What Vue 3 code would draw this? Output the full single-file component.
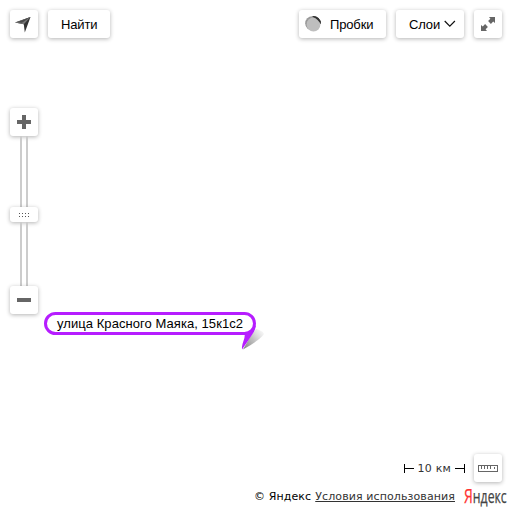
<script setup>
const address = 'улица Красного Маяка, 15к1с2'
const gripColumns = [1, 4, 7, 10]
</script>

<template>
  <main class="map">
    <header class="toolbar">
      <button class="control square" aria-label="Местоположение">
        <svg width="28" height="28" viewBox="0 0 28 28">
          <path d="M5 12.5 20.5 7 14.8 22.5 13.8 14.2Z" fill="#333" />
          <path d="M5 12.5 20.5 7 13.8 14.2Z" fill="#777" />
          <path d="M7 12.2 20.5 7 12 12.8Z" fill="#4a4a4a" />
        </svg>
      </button>
      <button class="control find">Найти</button>
      <span class="spacer"></span>
      <button class="control traffic">
        <svg width="18" height="18" viewBox="0 0 18 18">
          <circle cx="7.2" cy="8.2" r="7" fill="#999" />
          <path d="M7.2 1.2A7.6 7.6 0 0 1 15.9 9L12.5 7Z" fill="#333" />
          <circle cx="8.5" cy="9.5" r="6.9" fill="#bebebe" />
          <path d="M8 1.2A7.4 7.4 0 0 1 15.9 9Q13.2 4.8 8 1.2Z" fill="#333" />
        </svg>
        <span>Пробки</span>
      </button>
      <button class="control layers">
        <span>Слои</span>
        <svg width="12" height="8" viewBox="0 0 12 8">
          <path d="M.7 1 5.8 6.2 10.9 1" fill="none" stroke="#111" stroke-width="1.2" />
        </svg>
      </button>
      <button class="control square" aria-label="На весь экран">
        <svg width="28" height="28" viewBox="0 0 28 28" fill="#666">
          <path d="M15 7H21V13L19.2 11.6 16.9 13.9 14.1 11.1 16.4 8.8Z" />
          <path d="M13 21H7V15L8.8 16.4 11.1 14.1 13.9 16.9 11.6 19.2Z" />
        </svg>
      </button>
    </header>

    <section class="zoom">
      <button class="control square" aria-label="Приблизить">
        <svg width="28" height="28" viewBox="0 0 28 28">
          <path d="M7 12H12V7H16V12H21V16H16V21H12V16H7Z" fill="#666" />
        </svg>
      </button>
      <div class="rail upper"></div>
      <div class="control thumb">
        <svg width="12" height="6" viewBox="0 0 12 6" fill="#555">
          <template v-for="x in gripColumns" :key="x">
            <rect :x="x" y="1" width="1" height="1" />
            <rect :x="x" y="4" width="1" height="1" />
          </template>
        </svg>
      </div>
      <div class="rail lower"></div>
      <button class="control square" aria-label="Отдалить">
        <svg width="28" height="28" viewBox="0 0 28 28">
          <rect x="7" y="12" width="14" height="4" fill="#666" />
        </svg>
      </button>
    </section>

    <section class="balloon">
      <span>{{ address }}</span>
      <svg class="tail" width="36" height="32" viewBox="0 0 36 32">
        <defs>
          <linearGradient id="tail-shadow" x1="5" y1="27" x2="25" y2="11" gradientUnits="userSpaceOnUse">
            <stop offset="0" stop-color="#666" stop-opacity=".8" />
            <stop offset=".5" stop-color="#999" stop-opacity=".6" />
            <stop offset="1" stop-color="#bbb" stop-opacity=".1" />
          </linearGradient>
        </defs>
        <path d="M4 28.5 11 16 17 8Q24 10 25 13Q21 19 4 28.5Z" fill="url(#tail-shadow)" />
        <path d="M6 12H10L17 4Q16 10 13.5 13Q9 20 3 28.5Q2.5 27 3.5 23Q6 17 6 12Z" fill="#b61dff" />
      </svg>
    </section>

    <footer class="bottom">
      <div class="measure">
        <div class="scale">
          <i class="cap left"></i>
          <span>10 км</span>
          <i class="cap right"></i>
        </div>
        <button class="control square" aria-label="Линейка">
          <svg width="28" height="28" viewBox="0 0 28 28">
            <rect x="4.5" y="11.5" width="19" height="6" fill="#fff" stroke="#666" />
            <path d="M7.5 12V15M10.5 12V15M13.5 12V15M16.5 12V15M20.5 13V15" stroke="#666" />
          </svg>
        </button>
      </div>
      <div class="copyright">
        <span class="owner">© Яндекс</span>
        <a class="terms">Условия использования</a>
        <span class="logo"><b>Я</b>ндекс</span>
      </div>
    </footer>
  </main>
</template>

<style>
body { background: #fff; }
</style>

<style scoped>
.map {
  box-sizing: border-box;
  display: flex;
  flex-direction: column;
  width: 512px;
  height: 512px;
  padding: 10px;
  overflow: hidden;
  background: #fff;
  color: #000;
  font-family: "Liberation Sans", Arial, sans-serif;
  font-size: 13px;
}
.control {
  display: flex;
  align-items: center;
  box-sizing: border-box;
  height: 28px;
  margin: 0;
  padding: 0;
  border: 0;
  border-radius: 3px;
  background: #fff;
  box-shadow: 0 1px 4px rgba(0, 0, 0, .3);
  color: #000;
  font: inherit;
  white-space: nowrap;
  flex: none;
}
.square { width: 28px; }
svg { display: block; flex: none; }
.toolbar { display: flex; gap: 10px; }
.toolbar .spacer { flex: 1; margin-left: -10px; }
.find { width: 62px; padding-left: 13px; letter-spacing: -.15px; }
.traffic { width: 87px; padding-left: 6px; gap: 7px; letter-spacing: -.15px; }
.layers { width: 68px; padding-left: 13px; gap: 4px; letter-spacing: -.15px; }
.zoom {
  display: flex;
  flex-direction: column;
  align-items: center;
  width: 28px;
  margin-top: 70px;
}
.rail {
  box-sizing: border-box;
  width: 8px;
  border: solid #ccc;
  border-width: 0 2px;
}
.upper { height: 71px; }
.lower { height: 64px; }
.thumb { width: 28px; height: 15px; justify-content: center; }
.balloon {
  position: relative;
  box-sizing: border-box;
  display: flex;
  align-items: center;
  width: 212px;
  height: 23px;
  padding-left: 10px;
  margin: -2px 0 0 34px;
  border: 3px solid #b61dff;
  border-radius: 12px;
  letter-spacing: .06px;
  white-space: nowrap;
}
.tail { position: absolute; left: 192px; top: 6px; }
.bottom { margin-top: auto; margin-right: -5px; }
.measure {
  display: flex;
  justify-content: flex-end;
  align-items: center;
  gap: 9px;
  margin-right: 5px;
}
.scale {
  display: flex;
  align-items: center;
  gap: 4px;
  font: 11px/14px "DejaVu Sans", sans-serif;
  color: #333;
}
.scale span { padding-top: 2px; letter-spacing: .2px; }
.cap {
  width: 9px;
  height: 9px;
  background: linear-gradient(#000, #000) 0 4px / 100% 1px no-repeat;
}
.left { border-left: 1px solid #000; }
.right { border-right: 1px solid #000; }
.copyright {
  display: flex;
  align-items: center;
  justify-content: flex-end;
  height: 20px;
  margin-top: 4px;
  margin-bottom: -4px;
  font: 11px/14px "DejaVu Sans", sans-serif;
  white-space: nowrap;
  letter-spacing: .1px;
}
.owner, .terms { padding-top: 2px; }
.terms { margin-left: 4px; color: #333; text-decoration: underline; }
.logo {
  width: 43px;
  margin-left: 9px;
  font: 500 17.5px/18px "Open Sans", sans-serif;
  letter-spacing: 0;
  color: #444;
  transform: scaleX(.7);
  transform-origin: left center;
  -webkit-text-stroke: .25px currentColor;
}
.logo b { color: #f33; font-weight: 400; font-size: 20px; }
</style>
